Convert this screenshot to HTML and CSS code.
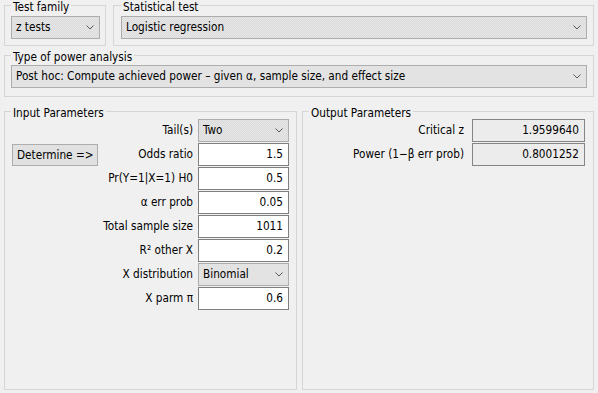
FILE: index.html
```html
<!DOCTYPE html>
<html>
<head>
<meta charset="utf-8">
<link rel="stylesheet" href="styles.css">
</head>
<body>
<div class="win">
  <div class="row top">
    <div class="group g-family">
      <div class="title">Test family</div>
      <div class="combo dotted"><span>z tests</span><svg class="chev" width="8" height="5" viewBox="0 0 8 5"><polyline points="0.5,0.5 4,4 7.5,0.5"/></svg></div>
    </div>
    <div class="group g-stat">
      <div class="title">Statistical test</div>
      <div class="combo dotted"><span>Logistic regression</span><svg class="chev" width="8" height="5" viewBox="0 0 8 5"><polyline points="0.5,0.5 4,4 7.5,0.5"/></svg></div>
    </div>
  </div>
  <div class="group g-type">
    <div class="title">Type of power analysis</div>
    <div class="combo"><span>Post hoc: Compute achieved power – given α, sample size, and effect size</span><svg class="chev" width="8" height="5" viewBox="0 0 8 5"><polyline points="0.5,0.5 4,4 7.5,0.5"/></svg></div>
  </div>
  <div class="row params">
    <div class="group g-input">
      <div class="title">Input Parameters</div>
      <div class="form">
        <div class="lbl r1">Tail(s)</div>
        <div class="combo dotted r1"><span>Two</span><svg class="chev" width="8" height="5" viewBox="0 0 8 5"><polyline points="0.5,0.5 4,4 7.5,0.5"/></svg></div>
        <div class="btn r2">Determine =&gt;</div>
        <div class="lbl r2">Odds ratio</div>
        <div class="field r2">1.5</div>
        <div class="lbl r3">Pr(Y=1|X=1) H0</div>
        <div class="field r3">0.5</div>
        <div class="lbl r4">α err prob</div>
        <div class="field r4">0.05</div>
        <div class="lbl r5">Total sample size</div>
        <div class="field r5">1011</div>
        <div class="lbl r6">R² other X</div>
        <div class="field r6">0.2</div>
        <div class="lbl r7">X distribution</div>
        <div class="combo r7"><span>Binomial</span><svg class="chev" width="8" height="5" viewBox="0 0 8 5"><polyline points="0.5,0.5 4,4 7.5,0.5"/></svg></div>
        <div class="lbl r8">X parm π</div>
        <div class="field r8">0.6</div>
      </div>
    </div>
    <div class="group g-output">
      <div class="title">Output Parameters</div>
      <div class="form out">
        <div class="lbl">Critical z</div>
        <div class="field ro">1.9599640</div>
        <div class="lbl">Power (1−β err prob)</div>
        <div class="field ro">0.8001252</div>
      </div>
    </div>
  </div>
</div>
</body>
</html>
```
FILE: styles.css
```css
html, body {
  margin: 0;
  padding: 0;
  background: #f0f0f0;
}
body {
  font-family: "DejaVu Sans Condensed", "DejaVu Sans", "Liberation Sans", sans-serif;
  font-size: 11.7px;
  color: #000;
  width: 598px;
  height: 393px;
  overflow: hidden;
}
.win {
  padding: 5px 4px 0 4px;
}
.row {
  display: flex;
}
.top {
  gap: 7px;
}
.group {
  border: 1px solid #d5d5d5;
  box-sizing: border-box;
}
.title {
  width: fit-content;
  line-height: 13px;
  height: 13px;
  padding: 0 2px;
  margin: -5px 0 2px 0;
  background: #f0f0f0;
  white-space: nowrap;
}
.g-family {
  width: 102px;
  padding: 0 5px 6px 6px;
}
.g-stat {
  flex: 1;
  padding: 0 6px 6px 7px;
}
.g-type {
  margin-top: 9px;
  padding: 0 6px 8px 6px;
}
.g-type .title {
  margin-bottom: 1px;
}
.combo {
  height: 23px;
  box-sizing: border-box;
  border: 1px solid #adadad;
  background: #e3e3e3;
  display: flex;
  align-items: center;
  justify-content: space-between;
  padding: 0 5px 0 4px;
  line-height: 21px;
  white-space: nowrap;
  overflow: hidden;
}
.combo.dotted {
  background: repeating-conic-gradient(#e7e7e7 0 25%, #dadada 0 50%) 0 0 / 2px 2px;
}
.chev {
  flex: none;
  display: block;
}
.chev polyline {
  fill: none;
  stroke: #5a5a5a;
  stroke-width: 1;
}
.params {
  margin-top: 14px;
  height: 279px;
  gap: 5px;
}
.g-input {
  width: 293px;
  padding: 0 7px 0 7px;
}
.g-input .title {
  margin-left: -1px;
  margin-bottom: -1px;
}
.g-output {
  flex: 1;
  padding: 0 8px 0 6px;
}
.g-output .title {
  margin-bottom: -1px;
}
.form {
  display: grid;
  grid-template-columns: 86px 1fr 91px;
  grid-auto-rows: 23px;
  column-gap: 5px;
  row-gap: 1px;
}
.form.out {
  grid-template-columns: 1fr 113px;
  column-gap: 8px;
}
.lbl {
  line-height: 23px;
  text-align: right;
  white-space: nowrap;
  grid-column: 2;
}
.form.out .lbl {
  grid-column: 1;
}
.form .combo, .form .field {
  grid-column: 3;
}
.form.out .field {
  grid-column: 2;
}
.r1 { grid-row: 1; }
.r2 { grid-row: 2; }
.r3 { grid-row: 3; }
.r4 { grid-row: 4; }
.r5 { grid-row: 5; }
.r6 { grid-row: 6; }
.r7 { grid-row: 7; }
.r8 { grid-row: 8; }
.field {
  box-sizing: border-box;
  height: 23px;
  border: 1px solid #7f7f7f;
  background: #fff;
  text-align: right;
  line-height: 21px;
  padding-right: 5px;
}
.field.ro {
  background: #ececec;
  border-color: #858585;
}
.btn {
  grid-column: 1;
  box-sizing: border-box;
  height: 22px;
  margin-top: 1px;
  border: 1px solid #adadad;
  background: #e1e1e1;
  line-height: 20px;
  padding-left: 4px;
  white-space: nowrap;
}
```
